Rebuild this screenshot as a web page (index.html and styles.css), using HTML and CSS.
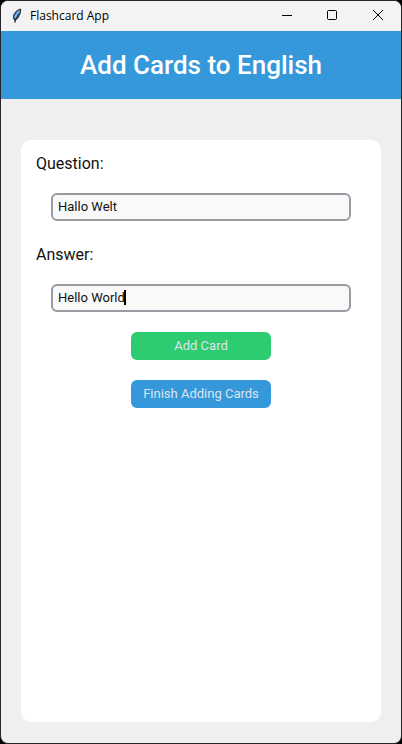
FILE: index.html
```html
<!DOCTYPE html>
<html lang="en">
<head>
<meta charset="utf-8">
<meta name="viewport" content="width=device-width, initial-scale=1">
<title>Flashcard App</title>
<link rel="stylesheet" href="styles.css">
</head>
<body>
<div class="window">
  <div class="titlebar">
    <svg class="app-icon" viewBox="0 0 16 16" aria-hidden="true">
      <path d="M10.5 .7 12.2 .8 11.8 5 9.6 9.8 7 12.2 6.4 14.8 5.4 14.8 5.5 12.2 4 10.6 4.2 6.8 7 3Z" fill="#24282d"/>
      <path d="M10.4 1.8 11.2 2 10.8 4.8 8.8 9 6.6 11.2 5 9.8 5.2 7 7.8 3.7Z" fill="#4a90dc"/>
      <path d="M9.6 3 6 9.6" stroke="#a9d0f5" stroke-width=".9" fill="none"/>
      <path d="M9.4 5.6 6 13" stroke="#17191c" stroke-width=".7" fill="none"/>
    </svg>
    <span class="app-name">Flashcard App</span>
    <div class="window-controls">
      <button type="button" class="control" aria-label="Minimize"><svg viewBox="0 0 12 12"><path d="M2 6.5H12"/></svg></button>
      <button type="button" class="control" aria-label="Maximize"><svg viewBox="0 0 12 12"><rect x="1.5" y="1.5" width="9" height="9" rx="1"/></svg></button>
      <button type="button" class="control" aria-label="Close"><svg viewBox="0 0 12 12"><path d="M1 1 11 11M11 1 1 11"/></svg></button>
    </div>
  </div>
  <header class="header"><h1>Add Cards to English</h1></header>
  <main class="content">
    <form class="card">
      <label for="question">Question:</label>
      <div class="field"><input id="question" type="text" value="Hallo Welt"></div>
      <label for="answer">Answer:</label>
      <div class="field"><input id="answer" type="text" value="Hello World"><span class="caret"></span></div>
      <div class="actions">
        <button type="button" class="action add">Add Card</button>
        <button type="button" class="action finish">Finish Adding Cards</button>
      </div>
    </form>
  </main>
</div>
</body>
</html>
```
FILE: styles.css
```css
* {
  box-sizing: border-box;
}

body {
  margin: 0;
  background: #000;
  font-family: Roboto, sans-serif;
  color: #111;
}

.window {
  display: flex;
  flex-direction: column;
  min-height: 100vh;
  border: 1px solid #262626;
  border-radius: 8px;
  background: #efefef;
  overflow: hidden;
}

.titlebar {
  display: flex;
  align-items: center;
  height: 30px;
  padding-left: 8px;
  background: #f3f3f3;
}

.app-icon {
  width: 16px;
  height: 16px;
}

.app-name {
  margin-left: 5px;
  font: 12px/16px "Open Sans", sans-serif;
  color: #000;
}

.window-controls {
  display: flex;
  height: 100%;
  margin-left: auto;
}

.control {
  display: flex;
  align-items: center;
  justify-content: center;
  width: 46px;
  padding: 0 0 2px;
  border: 0;
  background: none;
}

.control svg {
  width: 12px;
  height: 12px;
  fill: none;
  stroke: #000;
  stroke-width: 1;
}

.header {
  padding: 20px;
  background: #3498db;
  color: #fff;
  text-align: center;
}

h1 {
  margin: 0;
  font-size: 26px;
  font-weight: 500;
  line-height: 28px;
}

.content {
  display: flex;
  flex: 1;
  padding: 41px 20px 21px;
}

.card {
  flex: 1;
  padding: 12px 15px;
  border-radius: 10px;
  background: #fff;
}

label {
  display: block;
  font-size: 16px;
  line-height: 24px;
}

.field {
  position: relative;
  margin: 17px 15px 22px;
}

input {
  display: block;
  width: 100%;
  height: 28px;
  padding: 0 5px 2px;
  border: 2px solid #979da2;
  border-radius: 6px;
  outline: 0;
  background: #f9f9fa;
  color: #111;
  font: 13px Roboto, sans-serif;
}

.caret {
  position: absolute;
  top: 6px;
  left: 73px;
  width: 2px;
  height: 15px;
  background: #000;
}

.actions {
  display: flex;
  flex-direction: column;
  align-items: center;
  gap: 20px;
  margin-top: -2px;
}

.action {
  width: 140px;
  height: 28px;
  padding: 0 0 2px;
  border: 0;
  border-radius: 6px;
  color: #dce4ee;
  font: 13px Roboto, sans-serif;
}

.add {
  background: #2ecc71;
}

.finish {
  background: #3498db;
}
```
